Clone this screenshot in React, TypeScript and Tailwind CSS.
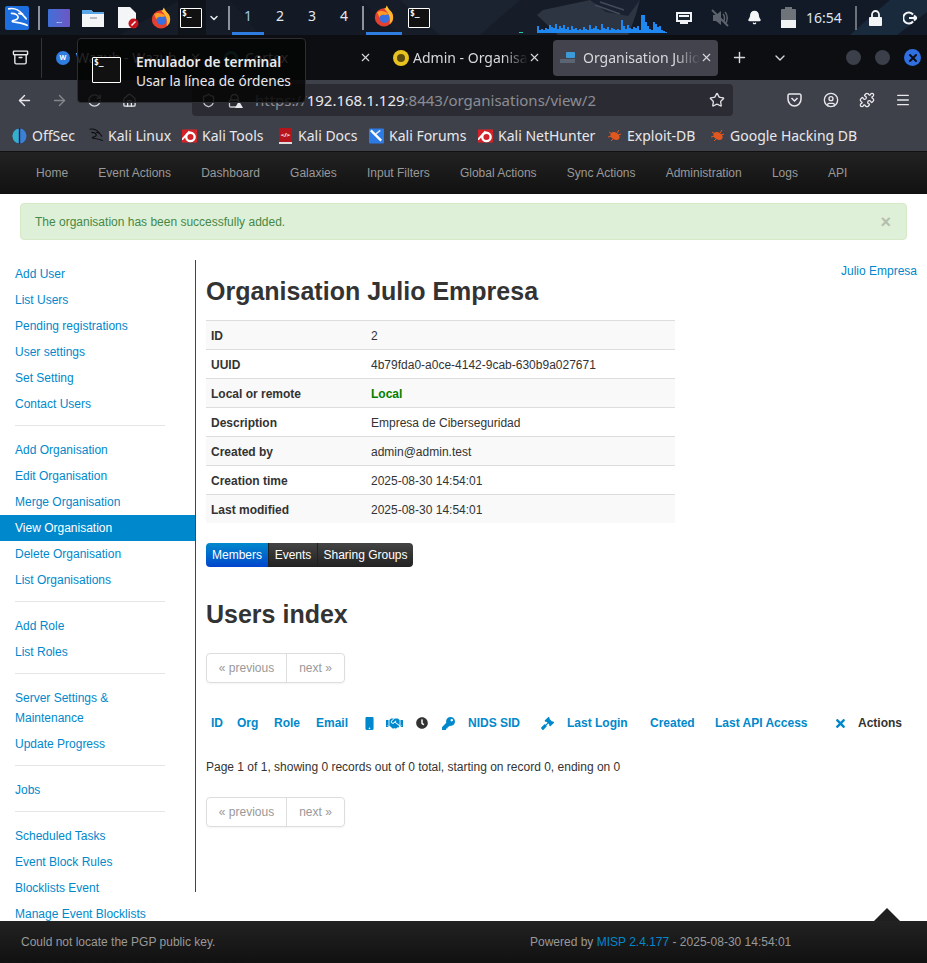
import { ArrowLeft, ArrowRight, RotateCw, Home, Shield, Star, CircleUser, Puzzle, Menu, Plus, ChevronDown, X, Bell, Archive } from 'lucide-react'
import { FaMobile, FaHandshake, FaClock, FaKey, FaGavel, FaTimes } from 'react-icons/fa'

const navItems = ['Home', 'Event Actions', 'Dashboard', 'Galaxies', 'Input Filters', 'Global Actions', 'Sync Actions', 'Administration', 'Logs', 'API']

const sideGroups = [
  ['Add User', 'List Users', 'Pending registrations', 'User settings', 'Set Setting', 'Contact Users'],
  ['Add Organisation', 'Edit Organisation', 'Merge Organisation', 'View Organisation', 'Delete Organisation', 'List Organisations'],
  ['Add Role', 'List Roles'],
  ['Server Settings & Maintenance', 'Update Progress'],
  ['Jobs'],
  ['Scheduled Tasks', 'Event Block Rules', 'Blocklists Event', 'Manage Event Blocklists'],
]

const orgRows = [
  ['ID', '2'],
  ['UUID', '4b79fda0-a0ce-4142-9cab-630b9a027671'],
  ['Local or remote', 'Local'],
  ['Description', 'Empresa de Ciberseguridad'],
  ['Created by', 'admin@admin.test'],
  ['Creation time', '2025-08-30 14:54:01'],
  ['Last modified', '2025-08-30 14:54:01'],
]

const netBars = [7,3,4,3,5,4,8,6,5,9,4,7,5,8,4,6,3,7,4,5,3,4,3,6,4,3,8,4,5,7,4,3,9,5,4,6,3,5,4,3,4,3,13,7,4,8,5,4,6,5,7,3,18,18,11,7,4,3,11,9,6,7,3,2,1]

const bookmarks: [string, string, number][] = [
  ['OffSec', 'off', 12],
  ['Kali Linux', 'linux', 88],
  ['Kali Tools', 'tools', 182],
  ['Kali Docs', 'docs', 278],
  ['Kali Forums', 'forums', 369],
  ['Kali NetHunter', 'tools', 478],
  ['Exploit-DB', 'bug', 607],
  ['Google Hacking DB', 'bug', 710],
]

function KaliMark({ size = 20, color = '#fff' }: { size?: number; color?: string }) {
  return (
    <svg width={size} height={size} viewBox="0 0 24 24" fill="none" stroke={color} strokeWidth="1.8" strokeLinecap="round" strokeLinejoin="round">
      <path d="M3 2c5-1 11 1 15 6 1 2 3 3 4 5" />
      <path d="M6 7c4 0 8 2 7 5-1 3-7 2-6 4 3 1 10 1 16 4" />
      <path d="M18 8l-4-1" />
    </svg>
  )
}

function Firefox({ size = 22 }: { size?: number }) {
  return (
    <svg width={size} height={size} viewBox="0 0 24 24">
      <circle cx="12" cy="13.5" r="10" fill="#e5402f" />
      <path d="M12 3.5c6 0 10 4.500 10 10 0 3-1.500 6-4 7.500 1.500-6-1-13-6-17.500z" fill="#ffb52e" />
      <path d="M15 0.500l3.500 6-5.500-1.500z" fill="#ffc233" />
      <circle cx="12.500" cy="14" r="5.500" fill="#3b6fe0" />
      <path d="M4.500 8c3-2.500 9-2 12.500 2l-4 1c-3-1-5 0-6 2.500z" fill="#ff9a28" />
    </svg>
  )
}

function TermIcon({ w = 22, h = 20 }: { w?: number; h?: number }) {
  return (
    <div className="shrink-0 border border-white rounded-[1px] bg-[#111] text-white font-bold text-[8px] leading-[10px] pl-[1px] font-['DejaVu_Sans_Mono',monospace]" style={{ width: w, height: h }}>
      $_
    </div>
  )
}

function Wallpaper() {
  return (
    <svg className="absolute inset-0" width="927" height="35" viewBox="0 0 927 35">
      <rect width="927" height="35" fill="#171d28" />
      <path d="M0 0h180l-60 35H0z" fill="#121822" />
      <path d="M230 0h130l40 35H260z" fill="#131a26" />
      <path d="M400 0h120l-40 35h-40z" fill="#1b2230" />
      <path d="M537 15l6-5 47-10h52l-14 35h-70z" fill="#2e3542" />
      <path d="M590 0h50l-12 16-22-4z" fill="#1a2130" />
      <path d="M595 5l25 9M600 2l24 8" stroke="#444b58" strokeWidth="1.500" />
      <path d="M640 0h287v35H630z" fill="#121a27" />
      <path d="M850 35l40-35h37v12l-30 23z" fill="#1a2a3d" />
      <path d="M178 0h28v35h-28z" fill="#0f141b" />
    </svg>
  )
}

function TopPanel() {
  return (
    <div className="relative h-[35px] overflow-hidden text-[#e6e9ee] font-['Noto_Sans',sans-serif] shrink-0">
      <Wallpaper />
      <div className="relative h-full flex items-center">
        <div className="w-[38px] h-full flex items-center pl-[5px] shrink-0">
          <div className="w-6 h-6 bg-[#1d6fe0] rounded-[2px] flex items-center justify-center"><KaliMark size={22} /></div>
        </div>
        <div className="w-[2px] h-6 bg-[#8b93a0] shrink-0" />
        <div className="w-2 shrink-0" />
        <div className="w-[22px] h-[18px] rounded-[1px] bg-gradient-to-r from-[#3f6fd8] to-[#6a57c4] text-[7px] text-white text-center leading-[24px] shrink-0">...</div>
        <div className="w-3 shrink-0" />
        <svg width="22" height="20" viewBox="0 0 22 20" className="shrink-0"><path d="M0 2h9l2 2h11v15H0z" fill="#f4f5f7" /><path d="M0 2h9l2 2h11v2H0z" fill="#5aa7e8" /><rect x="8" y="9" width="7" height="2" fill="#b9bdc4" /></svg>
        <div className="w-[14px] shrink-0" />
        <svg width="21" height="22" viewBox="0 0 21 22" className="shrink-0"><path d="M0 0h12l6 6v15H0z" fill="#f4f5f7" /><circle cx="15.500" cy="16.500" r="5" fill="#c8141e" /><path d="M13.500 18.500l4-4" stroke="#fff" strokeWidth="1.500" /></svg>
        <div className="w-[11px] shrink-0" />
        <Firefox />
        <div className="w-[8px] shrink-0" />
        <TermIcon />
        <ChevronDown size={12} strokeWidth={3} className="ml-[6px] shrink-0" />
        <div className="w-[8px] shrink-0" />
        <div className="w-[2px] h-6 bg-[#8b93a0] shrink-0" />
        <div className="flex h-full text-[14px] ml-[2px]">
          {['1', '2', '3', '4'].map((n, i) => (
            <div key={n} className={`w-8 h-full flex items-center justify-center border-b-[3px] ${i === 0 ? 'border-[#2f7de1] text-[#9cc4f5]' : 'border-transparent'}`}>{n}</div>
          ))}
        </div>
        <div className="w-[2px] h-6 bg-[#8b93a0] shrink-0 ml-[2px]" />
        <div className="w-[36px] h-full flex items-center justify-center border-b-[3px] border-[#2f7de1] ml-[2px] shrink-0"><Firefox /></div>
        <div className="w-[6px] shrink-0" />
        <TermIcon />
        <div className="flex-1 flex items-end h-full pl-[89px] pb-[2px]">
          <div className="w-[4px] h-[1px] bg-[#22c8b0] mr-[14px]" />
          <div className="flex items-end">
            {netBars.map((b, i) => (
              <div key={i} className="w-[2px] bg-[#1e88f0]" style={{ height: b }} />
            ))}
          </div>
        </div>
        <svg width="16" height="14" viewBox="0 0 16 14" className="shrink-0 mr-[19px]"><path d="M0 1h16v10h-4v2H4v-2H0z" fill="#f0f2f5" /><path d="M2 3h12v6H2z" fill="#1a2431" /><path d="M3 4h10v2H3z" fill="#f0f2f5" /></svg>
        <svg width="18" height="18" viewBox="0 0 18 18" className="mr-[18px] shrink-0">
          <path d="M2 6h3l5-4v14l-5-4H2z" fill="#5d636d" />
          <path d="M12 5c2 2 2 6 0 8M14 3c3 3 3 9 0 12" fill="none" stroke="#5d636d" strokeWidth="1.500" />
          <path d="M1 1l16 16" stroke="#5d636d" strokeWidth="2" />
        </svg>
        <Bell size={15} fill="#f4f5f7" className="text-[#f4f5f7] mr-[19px] shrink-0" />
        <div className="w-[15px] h-[21px] mr-[10px] flex flex-col items-center shrink-0">
          <div className="w-[7px] h-[2px] bg-[#6f747b]" />
          <div className="w-full flex-1 bg-[#6f747b] rounded-[1px] flex items-end"><div className="w-full h-[8px] bg-[#f1f2f4]" /></div>
        </div>
        <span className="text-[14px] text-[#dfe6ee] w-[36px] shrink-0">16:54</span>
        <div className="w-[2px] h-6 bg-[#6b727c] ml-[13px] mr-[11px] shrink-0" />
        <svg width="15" height="16" viewBox="0 0 15 16" className="mr-[20px] shrink-0">
          <path d="M4 7V4.500a3.500 3.500 0 0 1 7 0V7" fill="none" stroke="#f4f5f7" strokeWidth="1.800" />
          <rect x="1" y="7" width="13" height="9" rx="1" fill="#f4f5f7" />
        </svg>
        <svg width="14" height="14" viewBox="0 0 14 14" fill="none" stroke="#f4f5f7" strokeWidth="2" className="mr-[10px] shrink-0">
          <path d="M10 3.500a5.500 5.500 0 1 0 0 7" />
          <path d="M6 7h8M11 4.500L13.500 7 11 9.500" />
        </svg>
      </div>
    </div>
  )
}

function Tabs() {
  const fade = '[mask-image:linear-gradient(to_right,#000_78%,transparent)] whitespace-nowrap'
  return (
    <div className="h-[45px] bg-[#0d0e12] flex items-center text-[14px] text-[#d8d9dd] font-['Noto_Sans',sans-serif] shrink-0">
      <div className="w-[42px] flex justify-center border-r border-[#33343a] h-[40px] items-center shrink-0">
        <Archive size={17} className="text-[#e5e5e8]" />
      </div>
      <div className="w-[170px] flex items-center pl-[14px] pr-[10px] shrink-0">
        <div className="w-[14px] h-[14px] rounded-full bg-[#2f7de1] text-white text-[7px] font-bold text-center leading-[14px] shrink-0">W</div>
        <span className="ml-[6px] flex-1 whitespace-nowrap">Wazuh - Wazuh</span>
        <X size={13} className="shrink-0" />
      </div>
      <div className="w-[170px] flex items-center pl-[12px] pr-[10px] shrink-0">
        <div className="w-[14px] h-[14px] rounded-full border-[3px] border-[#2c7a68] shrink-0" />
        <span className="ml-[7px] flex-1">Cortex</span>
        <X size={13} className="shrink-0" />
      </div>
      <div className="w-[171px] flex items-center pl-[11px] pr-[13px] shrink-0">
        <div className="w-4 h-4 rounded-full bg-[#e8c21e] shrink-0 flex items-center justify-center"><div className="w-2 h-2 rounded-full bg-[#5b4a10]" /></div>
        <span className={`ml-[4px] flex-1 ${fade}`}>Admin - Organisa</span>
        <X size={13} className="shrink-0" />
      </div>
      <div className="w-[165px] h-[36px] rounded-[4px] bg-[#42434c] flex items-center pl-[7px] pr-[10px] shrink-0">
        <svg width="17" height="14" viewBox="0 0 17 14" className="shrink-0"><rect x="6" y="1" width="9" height="6" rx="1" fill="#3d9ad8" /><rect x="0" y="8" width="15" height="4" fill="#5a6472" /></svg>
        <span className={`ml-[6px] flex-1 ${fade}`}>Organisation Julio</span>
        <X size={13} className="shrink-0" />
      </div>
      <Plus size={17} className="ml-[13px] shrink-0" />
      <ChevronDown size={16} className="ml-[24px] shrink-0" />
      <div className="flex-1 flex justify-end items-center gap-[14px] pr-[6px]">
        <div className="w-[15px] h-[15px] rounded-full bg-[#3b3f4a]" />
        <div className="w-[15px] h-[15px] rounded-full bg-[#3b3f4a]" />
        <div className="w-[17px] h-[17px] rounded-full bg-[#2f6fe0] flex items-center justify-center"><X size={12} strokeWidth={4} className="text-[#0d0e12]" /></div>
      </div>
    </div>
  )
}

function Toolbar() {
  return (
    <div className="h-10 bg-[#3f414a] flex items-center text-[#e8e8ec] font-['Noto_Sans',sans-serif] shrink-0">
      <ArrowLeft size={17} className="ml-4 shrink-0" />
      <ArrowRight size={17} className="ml-[18px] text-[#85868d] shrink-0" />
      <RotateCw size={15} className="ml-[19px] text-[#d8d9dd] shrink-0" />
      <Home size={15} className="ml-[20px] shrink-0" />
      <div className="ml-[55px] w-[541px] h-8 rounded-[4px] bg-[#2b2c33] flex items-center shrink-0">
        <Shield size={15} className="ml-[9px] text-[#c8c9ce]" />
        <svg width="15" height="15" viewBox="0 0 15 15" className="ml-[12px]">
          <path d="M3 7V5a3.500 3.500 0 0 1 7 0v2" fill="none" stroke="#c8c9ce" strokeWidth="1.300" />
          <rect x="1.500" y="7" width="9" height="7" rx="1" fill="none" stroke="#c8c9ce" strokeWidth="1.300" />
          <path d="M11 8l4 7H7z" fill="#e8e8ec" />
        </svg>
        <span className="ml-[12px] text-[15px] text-[#8c8d94] flex-1">https://<span className="text-[#e8e8ec]">192.168.1.129</span>:8443/organisations/view/2</span>
        <Star size={16} className="mr-2 text-[#e0e0e4]" />
      </div>
      <svg width="15" height="14" viewBox="0 0 15 14" fill="none" stroke="#e8e8ec" strokeWidth="1.500" className="ml-[54px] shrink-0">
        <path d="M1 2.500a1.500 1.500 0 0 1 1.500-1.500h10a1.500 1.500 0 0 1 1.500 1.500v3.500a6.500 7 0 0 1-13 0z" />
        <path d="M4.500 5l3 3 3-3" />
      </svg>
      <CircleUser size={16} className="ml-[21px] shrink-0" />
      <Puzzle size={16} className="ml-[20px] shrink-0" />
      <Menu size={16} className="ml-[20px] shrink-0" />
    </div>
  )
}

function BookmarkIcon({ kind }: { kind: string }) {
  if (kind === 'off') return <svg width="15" height="16" viewBox="0 0 15 16"><ellipse cx="7.500" cy="8" rx="7" ry="7.500" fill="#3a80d8" /><rect x="6.800" y="0" width="1.400" height="16" fill="#25262c" /><path d="M0.500 8a7 7.500 0 0 0 6 7V1a7 7.500 0 0 0-6 7z" fill="#34b0c9" /></svg>
  if (kind === 'linux') return <KaliMark size={17} color="#0f0f12" />
  if (kind === 'tools') return <svg width="16" height="16" viewBox="0 0 16 16"><rect y="1" width="16" height="14" fill="#d3222a" /><circle cx="9" cy="9" r="4.500" fill="none" stroke="#fff" strokeWidth="2.500" /><path d="M0 12L8 3" stroke="#fff" strokeWidth="2" /></svg>
  if (kind === 'docs') return <div className="w-[13px] h-4 bg-[#b5141c] text-white text-[6px] font-bold text-center leading-[15px] border-b-2 border-[#ddd]">&lt;/&gt;</div>
  if (kind === 'forums') return <svg width="16" height="16" viewBox="0 0 16 16"><rect width="16" height="16" rx="1" fill="#2c7be5" /><path d="M2 2l11 11" stroke="#fff" strokeWidth="2.500" /><path d="M12 2L7 6" stroke="#dfe6f0" strokeWidth="1.500" /></svg>
  return <svg width="15" height="13" viewBox="0 0 15 13"><ellipse cx="8" cy="7" rx="5" ry="3.500" fill="#e2571e" transform="rotate(30 8 7)" /><path d="M2 3l3 2M1 8l4-1M4 12l3-3M12 1l-2 3M14 5l-3 1" stroke="#e2571e" strokeWidth="1" /></svg>
}

function Bookmarks() {
  return (
    <div className="h-[31px] bg-[#3f414a] flex items-center text-[14px] text-[#e8e8ec] font-['Noto_Sans',sans-serif] shrink-0">
      {bookmarks.map(([label, kind, x], i) => {
        const next = i < bookmarks.length - 1 ? bookmarks[i + 1][2] : x + 200
        return (
          <div key={label} className={`flex items-center gap-[5px] shrink-0 ${i === 0 ? 'ml-3' : ''}`} style={{ width: next - x }}>
            <div className="w-[15px] flex justify-center shrink-0"><BookmarkIcon kind={kind} /></div>
            <span className="whitespace-nowrap">{label}</span>
          </div>
        )
      })}
    </div>
  )
}

function Pager() {
  return (
    <div className="inline-flex h-[30px] border border-[#ddd] rounded-[4px] text-[12px] text-[#999] shadow-[0_1px_2px_rgba(0,0,0,0.05)] align-top">
      <span className="w-[80px] text-center leading-[28px] border-r border-[#ddd]">« previous</span>
      <span className="w-[57px] text-center leading-[28px]">next »</span>
    </div>
  )
}

function UserHeader() {
  const link = 'text-[#0088cc] font-bold'
  return (
    <div className="flex items-center h-5 mt-[30px] text-[12px]">
      <span className={`w-[26px] pl-[5px] ${link}`}>ID</span>
      <span className={`w-[37px] pl-[5px] ${link}`}>Org</span>
      <span className={`w-[42px] pl-[5px] ${link}`}>Role</span>
      <span className={`w-[49px] pl-[5px] ${link}`}>Email</span>
      <span className="w-[26px] pl-[3px] text-[#0088cc]"><FaMobile size={13} /></span>
      <span className="w-[30px] text-[#0088cc]"><FaHandshake size={17} /></span>
      <span className="w-[26px] text-[#333]"><FaClock size={12} /></span>
      <span className="w-[26px] text-[#0088cc]"><FaKey size={13} /></span>
      <span className={`w-[73px] ${link}`}>NIDS SID</span>
      <span className="w-[26px] text-[#0088cc]"><FaGavel size={13} /></span>
      <span className={`w-[83px] ${link}`}>Last Login</span>
      <span className={`w-[65px] ${link}`}>Created</span>
      <span className={`w-[119px] ${link}`}>Last API Access</span>
      <span className="w-[24px] text-[#0088cc]"><FaTimes size={13} /></span>
      <span className="font-bold text-[#333]">Actions</span>
    </div>
  )
}

function Tooltip() {
  return (
    <div className="absolute left-[77px] top-[38px] w-[229px] h-[65px] bg-[#050505]/85 border border-[#2d2e33] rounded-[4px] flex items-center font-['Noto_Sans',sans-serif] z-20">
      <div className="ml-[14px] -mt-[2px]"><TermIcon w={29} h={26} /></div>
      <div className="ml-[15px] text-[13.7px] leading-[19px] whitespace-nowrap text-[#e8e8ec]">
        <div className="font-semibold">Emulador de terminal</div>
        <div>Usar la línea de órdenes</div>
      </div>
    </div>
  )
}

export default function App() {
  return (
    <div className="relative h-[963px] w-[927px] overflow-hidden bg-white flex flex-col font-['Liberation_Sans',sans-serif] text-[12px] leading-5 text-[#333]">
      <TopPanel />
      <Tabs />
      <Toolbar />
      <Bookmarks />
      <Tooltip />

      {/* MISP nav */}
      <div className="h-[43px] shrink-0 bg-gradient-to-b from-[#222] to-[#111] border-t border-[#111] flex items-center pl-[21px] text-[#999]">
        {navItems.map(n => (
          <span key={n} className="px-[15.1px] whitespace-nowrap">{n}</span>
        ))}
      </div>

      <div className="mx-5 mt-[9px] h-[37px] shrink-0 bg-[#dff0d8] border border-[#d6e9c6] rounded-[4px] flex items-center justify-between pl-[14px] pr-[15px] text-[#468847]">
        <span>The organisation has been successfully added.</span>
        <span className="text-[18px] font-bold text-[#b3bfae]">×</span>
      </div>

      <div className="flex flex-1 min-h-0 mt-5">
        <div className="w-[196px] h-[632px] pt-px shrink-0 border-r border-[#444]">
          {sideGroups.map((group, gi) => (
            <div key={gi}>
              {gi > 0 && <div className="h-px bg-[#e5e5e5] mt-[8px] mb-[11px] mx-[15px] w-[150px]" />}
              {group.map(item => (
                <div
                  key={item}
                  className={`px-[15px] py-[3px] ${item === 'View Organisation' ? 'bg-[#0088cc] text-white' : 'text-[#0088cc]'} ${item.startsWith('Server') ? 'w-[130px]' : ''}`}
                >
                  {item}
                </div>
              ))}
            </div>
          ))}
        </div>

        <div className="flex-1 pt-px pl-[10px] pr-[10px]">
          <div className="flex justify-end h-[10px] text-[#0088cc]">Julio Empresa</div>
          <h2 className="text-[25px] leading-10 font-bold mb-[9px]">Organisation Julio Empresa</h2>
          <div className="w-[469px]">
            {orgRows.map(([k, v], i) => (
              <div key={k} className={`flex h-[29px] items-center pt-[2px] border-t border-[#ddd] ${i % 2 === 0 ? 'bg-[#f9f9f9]' : ''}`}>
                <span className="w-[165px] pl-[5px] font-bold">{k}</span>
                <span className={k === 'Local or remote' ? 'font-bold text-[#008000]' : ''}>{v}</span>
              </div>
            ))}
          </div>

          <div className="inline-flex mt-5 h-6 rounded-[4px] overflow-hidden text-white align-top">
            <span className="w-[62px] text-center leading-[25px] bg-gradient-to-b from-[#0088cc] to-[#0044cc]">Members</span>
            <span className="w-[49px] text-center leading-[25px] bg-gradient-to-b from-[#444] to-[#222] border-l border-[#222]">Events</span>
            <span className="w-[96px] text-center leading-[25px] bg-gradient-to-b from-[#444] to-[#222] border-l border-[#222]">Sharing Groups</span>
          </div>

          <h2 className="text-[25px] leading-10 font-bold mt-[27px] mb-[19px]">Users index</h2>
          <Pager />
          <UserHeader />
          <div className="mt-[24px]">Page 1 of 1, showing 0 records out of 0 total, starting on record 0, ending on 0</div>
          <div className="mt-5"><Pager /></div>
        </div>
      </div>

      <div className="absolute left-[874px] top-[908px] w-0 h-0 border-l-[13px] border-r-[13px] border-b-[13px] border-l-transparent border-r-transparent border-b-[#1f1f1f]" />
      <div className="relative h-[42px] shrink-0 bg-gradient-to-b from-[#222] to-[#111] flex items-center pl-[21px] text-[#999]">
        <span className="w-[509px]">Could not locate the PGP public key.</span>
        <span>Powered by <span className="text-[#0088cc]">MISP 2.4.177</span> - 2025-08-30 14:54:01</span>
      </div>
    </div>
  )
}
